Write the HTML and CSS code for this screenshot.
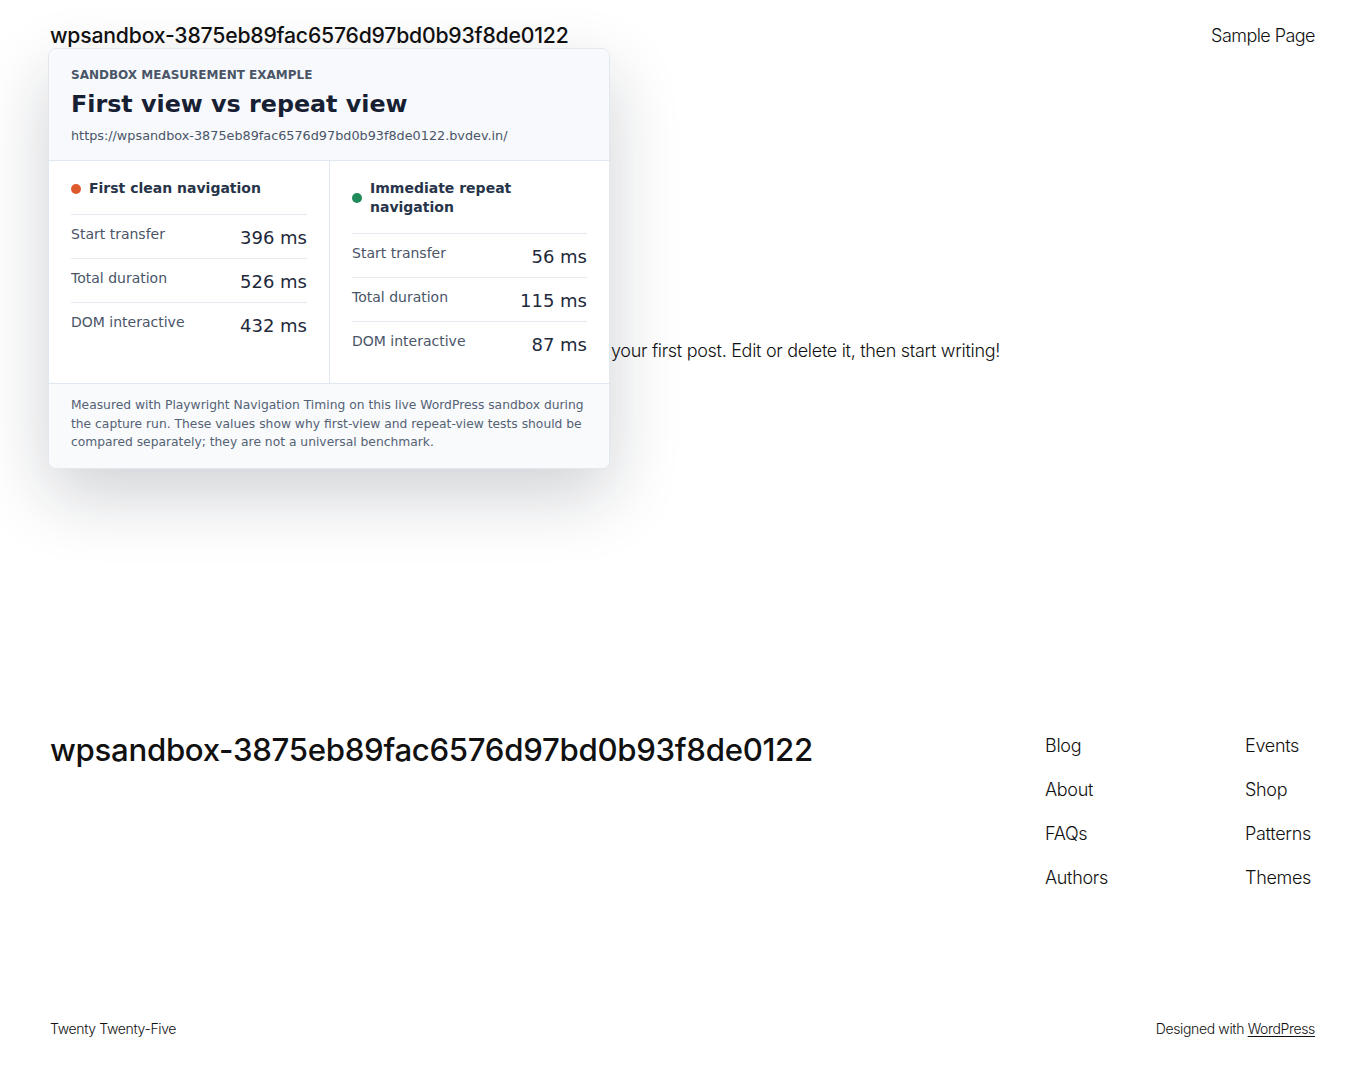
FILE: index.html
```html
<!DOCTYPE html>
<html lang="en">
<head>
<meta charset="utf-8">
<title>wpsandbox-3875eb89fac6576d97bd0b93f8de0122</title>
<link rel="stylesheet" href="styles.css">
</head>
<body>
<div class="site">
  <header class="site-header">
    <a class="site-title" href="#">wpsandbox-3875eb89fac6576d97bd0b93f8de0122</a>
    <nav class="top-nav"><a href="#">Sample Page</a></nav>
  </header>

  <main class="site-main">
    <h1 class="post-title">Hello world!</h1>
    <p class="post-text">Welcome to WordPress. This is your first post. Edit or delete it, then start writing!</p>
  </main>

  <footer class="site-footer">
    <div class="footer-top">
      <a class="footer-title" href="#">wpsandbox-3875eb89fac6576d97bd0b93f8de0122</a>
      <nav class="footer-nav">
        <ul class="footer-col">
          <li><a href="#">Blog</a></li>
          <li><a href="#">About</a></li>
          <li><a href="#">FAQs</a></li>
          <li><a href="#">Authors</a></li>
        </ul>
        <ul class="footer-col">
          <li><a href="#">Events</a></li>
          <li><a href="#">Shop</a></li>
          <li><a href="#">Patterns</a></li>
          <li><a href="#">Themes</a></li>
        </ul>
      </nav>
    </div>
    <div class="footer-bottom">
      <span>Twenty Twenty-Five</span>
      <span>Designed with <a class="wp-link" href="#">WordPress</a></span>
    </div>
  </footer>
</div>

<section class="card">
  <div class="card-head">
    <div class="eyebrow">SANDBOX MEASUREMENT EXAMPLE</div>
    <h2 class="card-title">First view vs repeat view</h2>
    <div class="card-url">https://wpsandbox-3875eb89fac6576d97bd0b93f8de0122.bvdev.in/</div>
  </div>
  <div class="card-cols">
    <div class="col">
      <div class="col-head"><span class="dot dot-first"></span><span>First clean navigation</span></div>
      <div class="row"><span class="label">Start transfer</span><span class="value">396 ms</span></div>
      <div class="row"><span class="label">Total duration</span><span class="value">526 ms</span></div>
      <div class="row"><span class="label">DOM interactive</span><span class="value">432 ms</span></div>
    </div>
    <div class="col col-right">
      <div class="col-head"><span class="dot dot-repeat"></span><span>Immediate repeat navigation</span></div>
      <div class="row"><span class="label">Start transfer</span><span class="value">56 ms</span></div>
      <div class="row"><span class="label">Total duration</span><span class="value">115 ms</span></div>
      <div class="row"><span class="label">DOM interactive</span><span class="value">87 ms</span></div>
    </div>
  </div>
  <div class="card-foot">Measured with Playwright Navigation Timing on this live WordPress sandbox during the capture run. These values show why first-view and repeat-view tests should be compared separately; they are not a universal benchmark.</div>
</section>
</body>
</html>
```

FILE: styles.css
```css
* { box-sizing: border-box; }

html, body {
  margin: 0;
  padding: 0;
  background: #ffffff;
}

body {
  font-family: "Inter", "Liberation Sans", sans-serif;
  color: #111111;
  font-weight: 300;
}

a { color: inherit; text-decoration: none; }

.site {
  min-height: 1089px;
  display: flex;
  flex-direction: column;
}

/* Header */
.site-header {
  display: flex;
  justify-content: space-between;
  align-items: flex-start;
  padding: 22px 50px 0 50px;
}

.site-title {
  font-size: 21.2px;
  font-weight: 500;
  line-height: 27px;
  letter-spacing: -0.2px;
}

.top-nav {
  font-size: 18px;
  line-height: 27px;
  letter-spacing: -0.55px;
}

/* Main */
.site-main {
  width: 645px;
  margin: 0 auto;
  padding-top: 216px;
  height: 683px;
}

.post-title {
  margin: 0 0 24px 0;
  font-size: 40px;
  font-weight: 400;
  line-height: 1.2;
}

.post-text {
  margin: 0 0 0 -4px;
  font-size: 18px;
  line-height: 28px;
  letter-spacing: -0.3px;
}

/* Footer */
.site-footer {
  padding: 0 50px;
}

.footer-top {
  display: flex;
  justify-content: space-between;
  align-items: flex-start;
  height: 287px;
}

.footer-title {
  font-size: 31.2px;
  font-weight: 500;
  line-height: 40px;
  letter-spacing: -0.3px;
  margin-top: -2px;
}

.footer-nav {
  display: flex;
  width: 270px;
  justify-content: space-between;
}

.footer-col {
  list-style: none;
  margin: 0;
  padding: 0;
  display: flex;
  flex-direction: column;
  gap: 16px;
  font-size: 18px;
  line-height: 28px;
  letter-spacing: -0.3px;
}

.footer-col:last-child { width: 70px; }

.footer-bottom {
  display: flex;
  justify-content: space-between;
  font-size: 14px;
  line-height: 20px;
  letter-spacing: -0.35px;
}

.wp-link { text-decoration: underline; text-underline-offset: 2px; }

/* Measurement card overlay */
.card {
  position: absolute;
  top: 48px;
  left: 48px;
  width: 562px;
  background: #ffffff;
  border: 1px solid #e2e8f0;
  border-radius: 8px;
  overflow: hidden;
  box-shadow: 0 26px 70px rgba(15, 23, 42, 0.2);
  font-family: "DejaVu Sans", "Verdana", sans-serif;
  font-weight: 400;
  color: #1e293b;
}

.card-head {
  background: #f7f9fc;
  padding: 18px 22px 15px 22px;
  border-bottom: 1px solid #e2e8f0;
}

.eyebrow {
  font-size: 12px;
  font-weight: 700;
  line-height: 16px;
  letter-spacing: 0;
  color: #4a5568;
}

.card-title {
  margin: 5px 0 7px 0;
  font-size: 23.8px;
  font-weight: 700;
  line-height: 32px;
  color: #172033;
}

.card-url {
  font-size: 12.8px;
  line-height: 18px;
  color: #4a5568;
}

.card-cols {
  display: grid;
  grid-template-columns: 280px 1fr;
}

.col {
  padding: 18px 22px 18px 22px;
}

.col-right {
  border-left: 1px solid #e2e8f0;
}

.col-head {
  display: flex;
  align-items: center;
  gap: 8px;
  font-size: 14px;
  font-weight: 700;
  line-height: 19px;
  color: #273449;
  padding-bottom: 16px;
}

.dot {
  flex: 0 0 10px;
  width: 10px;
  height: 10px;
  border-radius: 50%;
}

.dot-first { background: #dc5a2c; }
.dot-repeat { background: #1f8a5a; }

.row {
  display: flex;
  justify-content: space-between;
  align-items: flex-start;
  border-top: 1px solid #e5e9f0;
  padding: 10px 0 7px 0;
}

.label {
  font-size: 14px;
  line-height: 19px;
  color: #4a5568;
}

.value {
  font-size: 18px;
  line-height: 26px;
  color: #1e293b;
}

.card-foot {
  background: #f8fafc;
  border-top: 1px solid #e2e8f0;
  padding: 12px 20px 16px 22px;
  font-size: 12.3px;
  line-height: 18.5px;
  color: #556274;
}
```
